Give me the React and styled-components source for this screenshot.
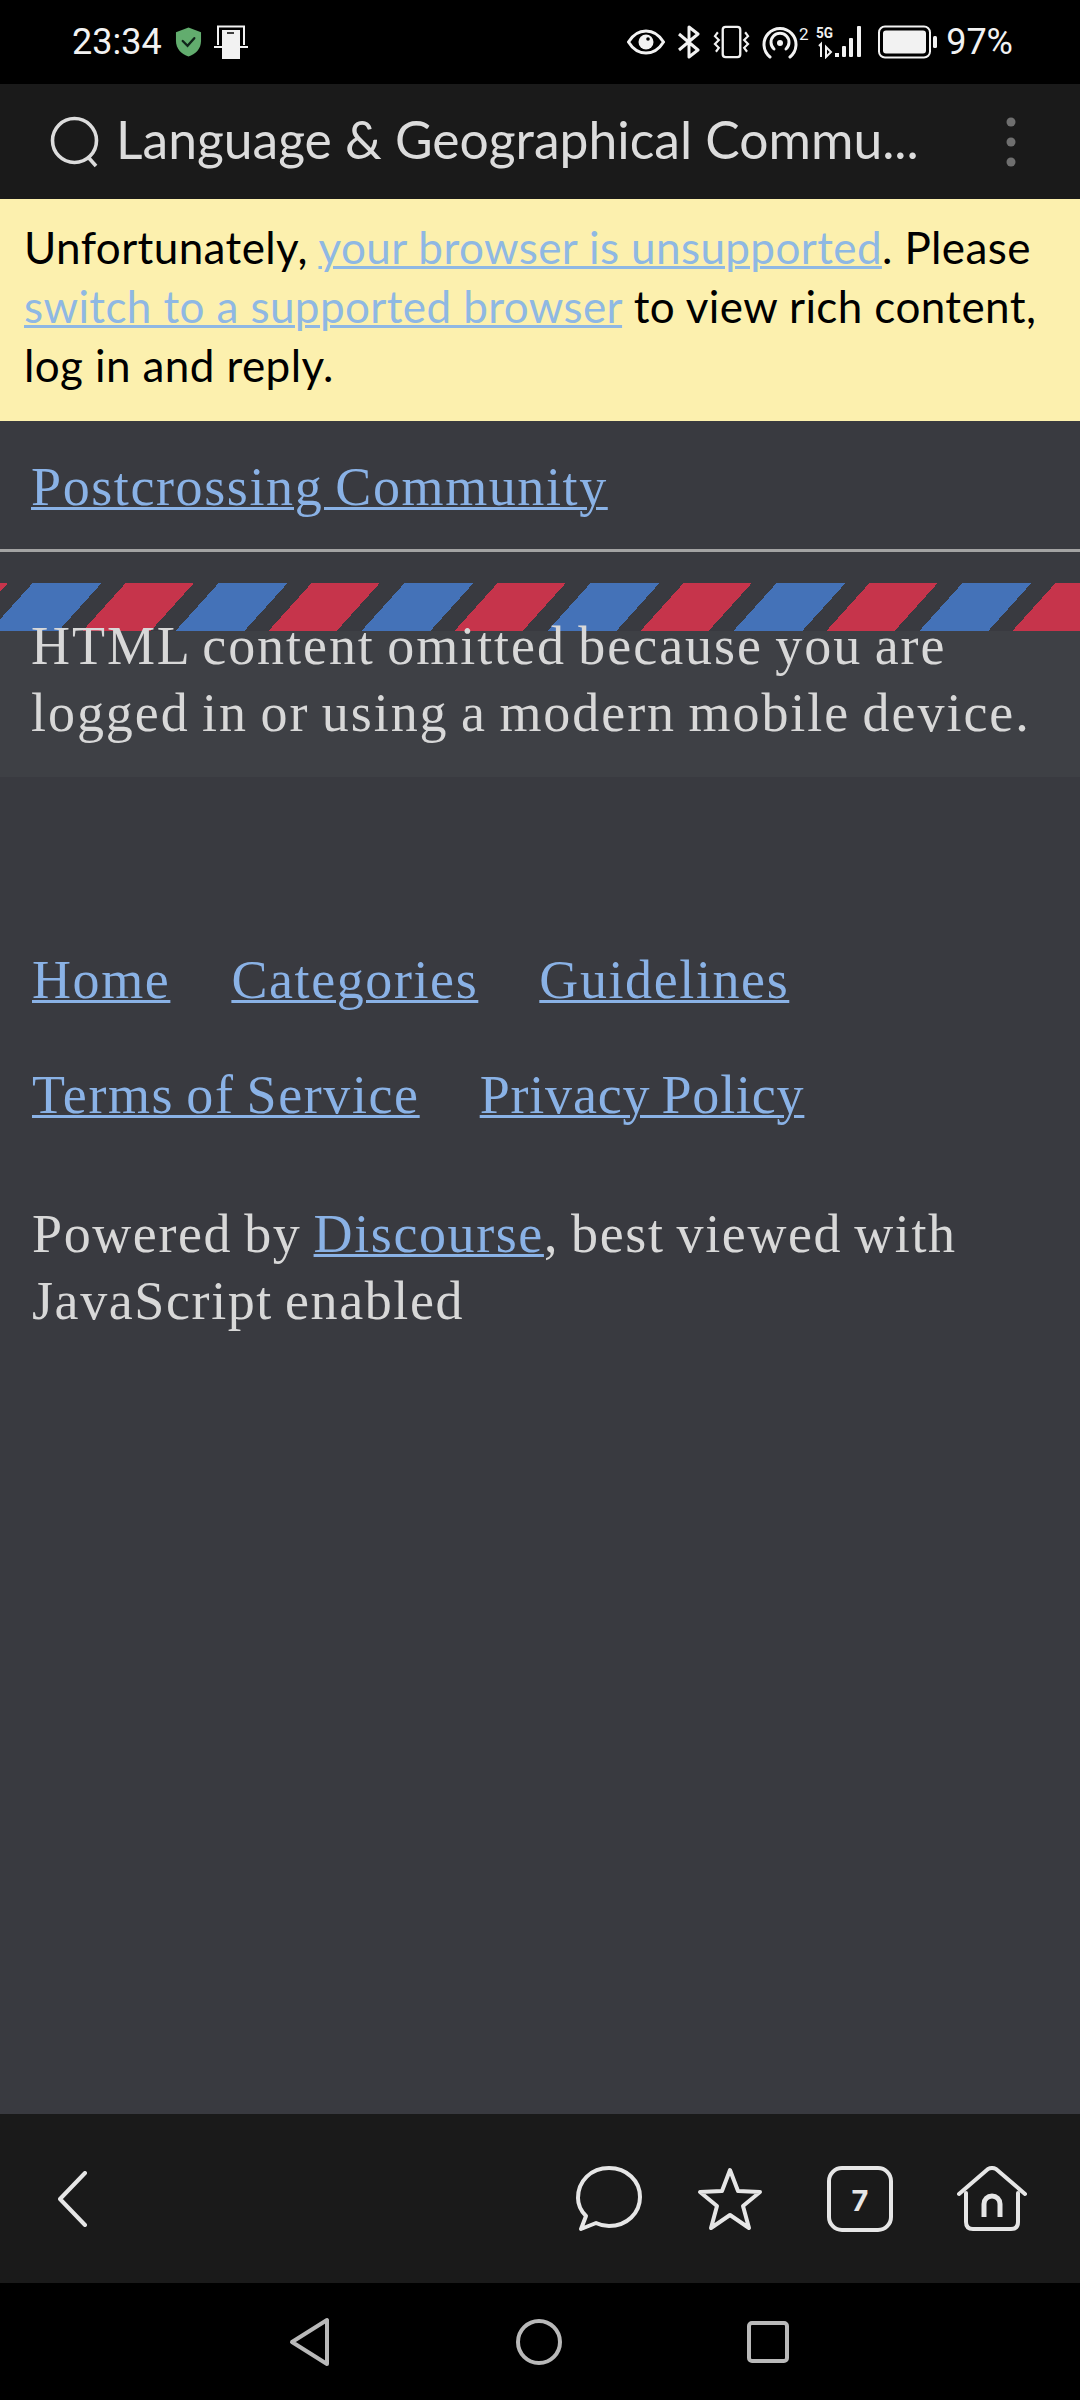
// App.jsx
import React from "react";
import styled, { createGlobalStyle } from "styled-components";

const GlobalStyle = createGlobalStyle`
  html, body {
    margin: 0;
    padding: 0;
    background: #000;
  }
`;

const Page = styled.div`
  width: 1080px;
  height: 2400px;
  display: flex;
  flex-direction: column;
  background: #393a40;
  overflow: hidden;
`;

const StatusBar = styled.div`
  height: 84px;
  flex: none;
  background: #000;
  color: #f2f2f2;
  display: flex;
  align-items: center;
  padding: 0 67px 0 72px;
  box-sizing: border-box;
  font-family: "Roboto", sans-serif;
  font-size: 36px;
`;

const StatusText = styled.span`
  letter-spacing: 0;
`;

const StatusGroup = styled.div`
  display: flex;
  align-items: center;
  gap: ${(p) => p.$gap || 12}px;
  margin-left: ${(p) => p.$left || "0"};
`;

const UrlBar = styled.div`
  height: 115px;
  flex: none;
  background: #1a1a1a;
  display: flex;
  align-items: center;
  padding: 0 64px 0 50px;
  box-sizing: border-box;
`;

const UrlTitle = styled.div`
  flex: 1;
  margin: 0 0 6px 16px;
  font-family: "Lato", sans-serif;
  font-size: 51.6px;
  color: #dcdcdc;
  white-space: nowrap;
`;

const Banner = styled.div`
  flex: none;
  background: #fcf0ae;
  color: #000;
  padding: 19px 24px 26px;
  font-family: "Lato", sans-serif;
  font-size: 44px;
  letter-spacing: 0.4px;
  line-height: 59px;
`;

const BannerLink = styled.a`
  color: #8fb8e3;
  text-decoration: underline;
  text-decoration-thickness: 3px;
`;

const Main = styled.main`
  flex: 1;
  font-family: "Liberation Serif", serif;
  font-size: 54px;
  letter-spacing: 1.6px;
  word-spacing: -3px;
  color: #d8d8d8;
`;

const Link = styled.a`
  color: #8ab2e6;
  text-decoration: underline;
  text-decoration-thickness: 3px;
  ${(p) => p.$spacing && `letter-spacing: ${p.$spacing}px;`}
`;

const SiteHeader = styled.div`
  height: 131px;
  padding: 0 31px 29px;
  display: flex;
  align-items: flex-end;
  line-height: 66px;
  box-sizing: border-box;
  border-bottom: 3px solid #a3a3a3;
`;

const Stripe = styled.div`
  height: 48px;
  margin-top: 31px;
  background: repeating-linear-gradient(
    132deg,
    #c6344b 0 5.87px,
    transparent 5.87px 24.3px,
    #4472b8 24.3px 75.5px,
    transparent 75.5px 93.4px,
    #c6344b 93.4px 138.2px
  );
`;

const Post = styled.div`
  display: flow-root;
  height: 146px;
  background: #3e4045;
  padding: 0 31px;
  line-height: 67px;
  box-sizing: border-box;
`;

const PostText = styled.div`
  margin-top: -18px;
  letter-spacing: 1.95px;
`;

const Footer = styled.div`
  padding: 170px 32px 0;
`;

const FooterLinks = styled.div`
  display: flex;
  gap: ${(p) => p.$gap}px;
  line-height: 66px;
  margin-bottom: 49px;
`;

const Powered = styled.div`
  margin-top: 73px;
  line-height: 67px;
`;

const BottomBar = styled.div`
  height: 169px;
  flex: none;
  background: #1a1a1a;
  display: flex;
  align-items: center;
  padding: 0 53px 0 58px;
  box-sizing: border-box;
`;

const BarSpacer = styled.div`
  flex: 1;
`;

const BarIcons = styled.div`
  display: flex;
  align-items: center;
  gap: ${(p) => p.$gap}px;
`;

const SystemNav = styled.div`
  height: 117px;
  flex: none;
  background: #000;
  display: flex;
  align-items: center;
  padding: 0 291px 0 289px;
  justify-content: space-between;
  box-sizing: border-box;
`;

const Glyph = styled.svg`
  display: block;
  flex: none;
`;

const Shield = () => (
  <Glyph width="27" height="32" viewBox="0 0 28 32">
    <path d="M14 1 L27 6 V15 C27 23 21 29 14 31 C7 29 1 23 1 15 V6 Z" fill="#62ad6e" />
    <path d="M8 15 L13 20 L20 12" fill="none" stroke="#10251a" strokeWidth="2.4" strokeLinecap="round" />
  </Glyph>
);

const CastIcon = () => (
  <Glyph width="34" height="34" viewBox="0 0 34 34">
    <path d="M4 20 V1.5 H30 V20" fill="none" stroke="#f2f2f2" strokeWidth="2" />
    <path d="M0 22 H8 M26 22 H34" stroke="#f2f2f2" strokeWidth="2" />
    <rect x="8" y="5" width="18" height="29" fill="#f2f2f2" />
    <path d="M13 8 H20" stroke="#111" strokeWidth="1.6" />
  </Glyph>
);

const EyeIcon = () => (
  <Glyph width="38" height="28" viewBox="0 0 38 26">
    <path d="M1.5 13 C7 4 13 2 19 2 C25 2 31 4 36.5 13 C31 22 25 24 19 24 C13 24 7 22 1.5 13 Z" fill="none" stroke="#f2f2f2" strokeWidth="3" />
    <circle cx="19" cy="13" r="7.5" fill="#f2f2f2" />
    <circle cx="21" cy="10" r="1.8" fill="#000" />
  </Glyph>
);

const BluetoothIcon = () => (
  <Glyph width="24" height="34" viewBox="0 0 24 34">
    <path d="M2 9 L21 25 L12 32 V2 L21 9 L2 25" fill="none" stroke="#f2f2f2" strokeWidth="3" strokeLinejoin="round" />
  </Glyph>
);

const VibrateIcon = () => (
  <Glyph width="37" height="34" viewBox="0 0 38 34">
    <rect x="10" y="1.5" width="18" height="31" rx="3" fill="none" stroke="#f2f2f2" strokeWidth="2.4" />
    <path d="M5 7 L2 11 L6 15 L2 19 L6 23 L3 27 M33 7 L36 11 L32 15 L36 19 L32 23 L35 27" fill="none" stroke="#f2f2f2" strokeWidth="2.2" />
  </Glyph>
);

const HotspotIcon = () => (
  <Glyph width="48" height="34" viewBox="0 0 48 34">
    <path d="M8 32 A16 16 0 1 1 28 32" fill="none" stroke="#f2f2f2" strokeWidth="3" strokeLinecap="round" />
    <path d="M12 24 A9 9 0 1 1 24 24" fill="none" stroke="#f2f2f2" strokeWidth="3" strokeLinecap="round" />
    <circle cx="18" cy="18" r="3" fill="#f2f2f2" />
    <text x="37" y="15" fill="#f2f2f2" fontFamily="Roboto, sans-serif" fontSize="17">2</text>
  </Glyph>
);

const SignalIcon = () => (
  <Glyph width="50" height="34" viewBox="0 0 50 34">
    <text x="0" y="13" fill="#f2f2f2" fontFamily="Roboto, sans-serif" fontSize="15" fontWeight="700" textLength="17" lengthAdjust="spacingAndGlyphs">5G</text>
    <path d="M3 21 L5 19 V32 M10 22 V32 L15 27 Z" fill="none" stroke="#f2f2f2" strokeWidth="2" />
    <rect x="19" y="28" width="4" height="4" fill="#f2f2f2" />
    <rect x="26" y="21" width="4" height="11" rx="1" fill="#f2f2f2" />
    <rect x="33" y="13" width="4" height="19" rx="1" fill="#f2f2f2" />
    <rect x="41" y="1" width="4" height="31" rx="1" fill="#f2f2f2" />
  </Glyph>
);

const BatteryIcon = () => (
  <Glyph width="60" height="34" viewBox="0 0 60 34">
    <rect x="1" y="1.5" width="51" height="31" rx="6" fill="none" stroke="#f2f2f2" strokeWidth="2" />
    <rect x="5" y="5.5" width="43" height="23" rx="3" fill="#f2f2f2" />
    <rect x="55" y="11" width="4" height="12" rx="1.5" fill="#f2f2f2" />
  </Glyph>
);

const SearchIcon = () => (
  <Glyph width="50" height="52" viewBox="0 0 50 52">
    <circle cx="24.5" cy="24.5" r="22" fill="none" stroke="#dcdcdc" strokeWidth="3.6" />
    <path d="M38 41 L46 50" stroke="#dcdcdc" strokeWidth="3.6" />
  </Glyph>
);

const MoreDots = () => (
  <Glyph width="10" height="50" viewBox="0 0 10 50">
    <circle cx="5" cy="5" r="4.5" fill="#6f6f6f" />
    <circle cx="5" cy="25" r="4.5" fill="#6f6f6f" />
    <circle cx="5" cy="45" r="4.5" fill="#6f6f6f" />
  </Glyph>
);

const barStroke = { fill: "none", stroke: "#e6e6e6", strokeWidth: 4, strokeLinecap: "round", strokeLinejoin: "round" };

const BackIcon = () => (
  <Glyph width="30" height="56" viewBox="0 0 30 56">
    <path d="M27 2 L2 28 L27 54" {...barStroke} />
  </Glyph>
);

const CommentIcon = () => (
  <Glyph width="66" height="66" viewBox="0 0 66 66">
    <path d="M10 50 C4 44 2 38 2 32 C2 15 15 2 33 2 C51 2 64 15 64 31 C64 47 51 60 33 60 C28 60 24 59 20 57 L5 63 Z" {...barStroke} />
  </Glyph>
);

const StarIcon = () => (
  <Glyph width="66" height="64" viewBox="0 0 66 64">
    <path d="M33 3 L41 24 L63 25 L46 39 L52 61 L33 48 L14 61 L20 39 L3 25 L25 24 Z" {...barStroke} />
  </Glyph>
);

const TabsIcon = () => (
  <Glyph width="66" height="66" viewBox="0 0 66 66">
    <rect x="2" y="2" width="62" height="62" rx="13" {...barStroke} />
    <text x="33" y="45" textAnchor="middle" fill="#e6e6e6" fontFamily="Inter, sans-serif" fontWeight="700" fontSize="29">7</text>
  </Glyph>
);

const HomeIcon = () => (
  <Glyph width="70" height="66" viewBox="0 0 70 66">
    <path d="M2 28 L31 3 Q35 1 39 3 L68 28" {...barStroke} />
    <path d="M9 27 V56 Q9 63 16 63 H54 Q61 63 61 56 V27" {...barStroke} />
    <path d="M27 51 V38 A8 8 0 0 1 43 38 V51" {...barStroke} strokeWidth="5" strokeLinecap="butt" />
  </Glyph>
);

const navStroke = { fill: "none", stroke: "#b9b9b9", strokeWidth: 4, strokeLinejoin: "round" };

const NavBack = () => (
  <Glyph width="41" height="50" viewBox="0 0 41 50">
    <path d="M3 25 L38 3 V47 Z" {...navStroke} />
  </Glyph>
);

const NavHome = () => (
  <Glyph width="46" height="46" viewBox="0 0 46 46">
    <circle cx="23" cy="23" r="21" {...navStroke} />
  </Glyph>
);

const NavRecent = () => (
  <Glyph width="42" height="42" viewBox="0 0 42 42">
    <rect x="2" y="2" width="38" height="38" rx="3" {...navStroke} />
  </Glyph>
);

const App = () => {
  return (
    <Page>
      <GlobalStyle />
      <StatusBar>
        <StatusText>23:34</StatusText>
        <StatusGroup $left="13px" $gap={12}>
          <Shield />
          <CastIcon />
        </StatusGroup>
        <StatusGroup $left="auto" $gap={12}>
          <EyeIcon />
          <BluetoothIcon />
          <VibrateIcon />
          <StatusGroup $gap={6}>
            <HotspotIcon />
            <SignalIcon />
          </StatusGroup>
          <BatteryIcon />
        </StatusGroup>
        <StatusGroup $left="8px">
          <StatusText>97%</StatusText>
        </StatusGroup>
      </StatusBar>

      <UrlBar>
        <SearchIcon />
        <UrlTitle>Language &amp; Geographical Commu...</UrlTitle>
        <MoreDots />
      </UrlBar>

      <Banner>
        Unfortunately, <BannerLink>your browser is unsupported</BannerLink>. Please{" "}
        <BannerLink>switch to a supported browser</BannerLink> to view rich content, log in and reply.
      </Banner>

      <Main>
        <SiteHeader>
          <Link>Postcrossing Community</Link>
        </SiteHeader>
        <Stripe />
        <Post>
          <PostText>
            HTML content omitted because you are logged in or using a modern mobile device.
          </PostText>
        </Post>
        <Footer>
          <FooterLinks $gap={61}>
            <Link>Home</Link>
            <Link>Categories</Link>
            <Link>Guidelines</Link>
          </FooterLinks>
          <FooterLinks $gap={60}>
            <Link>Terms of Service</Link>
            <Link $spacing={0.8}>Privacy Policy</Link>
          </FooterLinks>
          <Powered>
            Powered by <Link>Discourse</Link>, best viewed with JavaScript enabled
          </Powered>
        </Footer>
      </Main>

      <BottomBar>
        <BackIcon />
        <BarSpacer />
        <BarIcons $gap={64}>
          <BarIcons $gap={55}>
            <CommentIcon />
            <StarIcon />
          </BarIcons>
          <TabsIcon />
          <HomeIcon />
        </BarIcons>
      </BottomBar>

      <SystemNav>
        <NavBack />
        <NavHome />
        <NavRecent />
      </SystemNav>
    </Page>
  );
};

export default App;
